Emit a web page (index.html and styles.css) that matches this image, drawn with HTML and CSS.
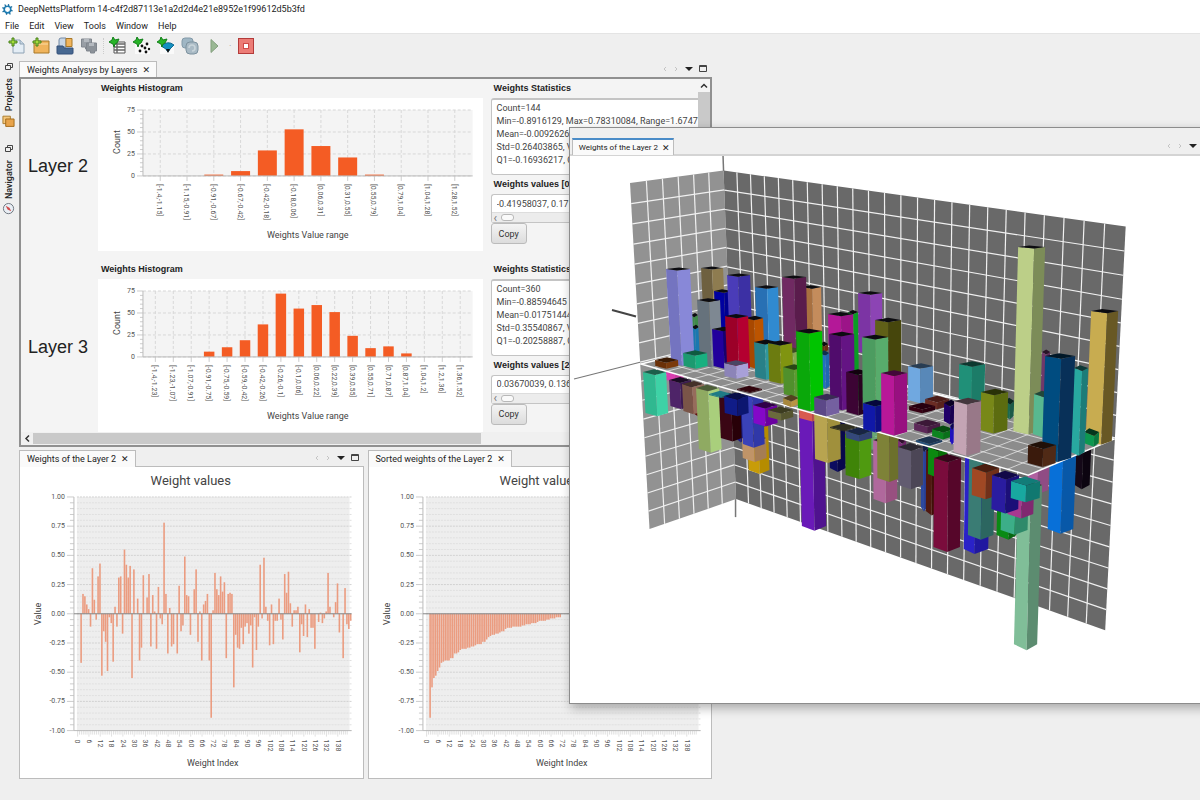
FILE: index.html
```html
<!DOCTYPE html>
<html lang="en">

<head>
    <meta charset="UTF-8">
    <meta name="viewport" content="width=device-width, initial-scale=1.0">
    <title>DeepNettsPlatform</title>
    <link rel="stylesheet" href="styles.css">
</head>

<body>
    <header class="titlebar">
        <svg class="logo" viewBox="0 0 12 12">
            <circle cx="6" cy="6" r="3.6" fill="none" stroke="#1d7fb8" stroke-width="1.8" />
            <path d="M3 0.5 4.5 3M7 0.2 7.5 2.5M0.4 4 3 5M0.6 8.6 3 7.4M9 11.4 8 9M5 11.8 4.8 9.5M11.6 7.6 9 7M11 2.6 9 4.2" stroke="#1d6f9f" stroke-width="1.4" />
        </svg>
        <span>DeepNettsPlatform 14-c4f2d87113e1a2d2d4e21e8952e1f99612d5b3fd</span>
    </header>

    <nav class="menubar">
        <button>File</button>
        <button>Edit</button>
        <button>View</button>
        <button>Tools</button>
        <button>Window</button>
        <button>Help</button>
    </nav>

    <div class="toolbar">
        <button aria-label="New file">
            <svg viewBox="0 0 18 18">
                <path d="M5 3h7l4 4v9H5z" fill="#e4edf5" stroke="#8fa3b5" />
                <path d="M12 3v4h4" fill="#c5d5e3" stroke="#8fa3b5" />
                <path d="M4 1h2v3h3v2H6v3H4V6H1V4h3z" fill="#a4dc3c" stroke="#47801c" />
            </svg>
        </button>
        <button aria-label="New project">
            <svg viewBox="0 0 18 18">
                <path d="M2 4h15v12H2z" fill="#f0b45c" stroke="#a87828" />
                <path d="M3 7h13" stroke="#fbdca4" />
                <path d="M4 1h2v3h3v2H6v3H4V6H1V4h3z" fill="#a4dc3c" stroke="#47801c" />
            </svg>
        </button>
        <button aria-label="Open project">
            <svg viewBox="0 0 18 18">
                <path d="M3 10V3q0-2 2-2h5v9z" fill="#c8d6e6" stroke="#7389a4" />
                <path d="M10 1.500h6v8h-6z" fill="#f0b45c" stroke="#a87828" />
                <path d="M1 9h6l1 2h9v5q0 1-1 1H2q-1 0-1-1z" fill="#476891" stroke="#34517a" />
            </svg>
        </button>
        <button aria-label="Save all">
            <svg viewBox="0 0 18 18">
                <path d="M1.500 2h10v8h-2v2h-4v-2h-4z" fill="#989ea5" stroke="#80868e" />
                <path d="M6.500 6h10v8h-2v2h-4v-2h-4z" fill="#8c9299" stroke="#80868e" />
                <path d="M4 2h5v3H4zM9 6h5v3H9z" fill="#b4b9bf" />
            </svg>
        </button>
        <span class="separator"></span>
        <button aria-label="New data set">
            <svg viewBox="0 0 18 18">
                <path d="M5 5h11v11H5z" fill="#fff" stroke="#555" />
                <path d="M5 7h11M5 10h11M5 13h11M8 6v10" stroke="#666" stroke-width="1.4" />
                <path d="M4 0l2 3 4-1-2 4-2 1-1 3-1-3-4-2 3-2z" fill="#28b428" stroke="#12801a" />
            </svg>
        </button>
        <button aria-label="New network">
            <svg viewBox="0 0 18 18">
                <path d="M2 6h15v11H2z" fill="#fafafa" />
                <g fill="#111"><circle cx="9" cy="9" r="1.400" /><circle cx="14" cy="7" r="1.400" /><circle cx="12" cy="11" r="1.400" /><circle cx="7" cy="14" r="1.400" /><circle cx="13" cy="15" r="1.400" /><circle cx="16" cy="12" r="1.200" /></g>
                <path d="M4 0l2 3 4-1-2 4-2 1-1 3-1-3-4-2 3-2z" fill="#28b428" stroke="#12801a" />
            </svg>
        </button>
        <button aria-label="New model">
            <svg viewBox="0 0 18 18">
                <path d="M3 6h14v11H3z" fill="#fafafa" />
                <path d="M4 9q7-6 13-1l-4 4q-2 5-4 0z" fill="#1490c0" stroke="#106a90" />
                <path d="M9 12l2 4 2-4" fill="#111" />
                <path d="M4 0l2 3 4-1-2 4-2 1-1 3-1-3-4-2 3-2z" fill="#28b428" stroke="#12801a" />
            </svg>
        </button>
        <button aria-label="Build">
            <svg viewBox="0 0 18 18">
                <rect x="1" y="1" width="11" height="10" rx="3" fill="#9fb6c4" stroke="#8299a8" />
                <rect x="5" y="5" width="12" height="12" rx="4" fill="#a9bac5" stroke="#7d929f" />
                <path d="M8 11a3 3 0 1 1 3 3" fill="none" stroke="#c8d4da" stroke-width="1.600" />
            </svg>
        </button>
        <button aria-label="Run">
            <svg viewBox="0 0 18 18"><path d="M6 2.500l7 6.500-7 6.500z" fill="#9ab894" stroke="#84a07e" /></svg>
        </button>
        <span class="more">·</span>
        <button aria-label="Stop">
            <svg viewBox="0 0 18 18">
                <rect x="1.500" y="1.500" width="15" height="15" fill="#ec7c76" stroke="#b33b3a" />
                <rect x="6.500" y="6.500" width="5" height="5" fill="#fff" stroke="#d04a48" />
            </svg>
        </button>
    </div>

    <div class="shell">
        <aside class="sidebar">
            <button class="dock" aria-label="Restore group"><svg viewBox="0 0 10 10"><path d="M3.500 3V1.500h5v4H7M1.500 3.500h5v4h-5z" fill="none" stroke="#444" /></svg></button>
            <button class="side-tab">
                <svg viewBox="0 0 14 14"><path d="M1 2h8v8H1z" fill="#f5c77c" stroke="#a87828" /><path d="M4 5h9v8H4z" fill="#e8a44c" stroke="#a06818" /></svg>
                <span>Projects</span>
            </button>
            <button class="dock" aria-label="Restore group"><svg viewBox="0 0 10 10"><path d="M3.500 3V1.500h5v4H7M1.500 3.500h5v4h-5z" fill="none" stroke="#444" /></svg></button>
            <button class="side-tab">
                <svg viewBox="0 0 14 14"><circle cx="7" cy="7" r="5.500" fill="#e9eef4" stroke="#68707a" /><path d="M4 4l4 2 2 4-4-2z" fill="#d04a4a" /></svg>
                <span>Navigator</span>
            </button>
        </aside>

        <main class="workspace">
            <section class="dock-panel layers">
                <div class="tab-row">
                    <div class="tab"><span>Weights Analysys by Layers</span><button class="close" aria-label="Close">✕</button></div>
                    <div class="tab-tools"></div>
                </div>
                <div class="layers-body">
                    <div class="layers-view">
                        <div class="layer-row">
                            <h2>Layer 2</h2>
                            <div class="histogram">
                                <h3>Weights Histogram</h3>
                                <svg class="chart" id="histogram2" viewBox="0 0 385 153"></svg>
                            </div>
                            <div class="stats">
                                <h3><label for="stats2">Weights Statistics</label></h3>
                                <textarea id="stats2" readonly>Count=144
Min=-0.8916129, Max=0.78310084, Range=1.6747137
Mean=-0.009262665
Std=0.26403865, Var=0.0697
Q1=-0.16936217, Q3=0.15</textarea>
                                <h3><label for="values2">Weights values [0]</label></h3>
                                <div class="values">
                                    <input id="values2" value="-0.41958037, 0.17182" readonly>
                                    <div class="mini-scroll"><i>‹</i><b></b></div>
                                </div>
                                <button class="copy">Copy</button>
                            </div>
                        </div>
                        <div class="layer-row">
                            <h2>Layer 3</h2>
                            <div class="histogram">
                                <h3>Weights Histogram</h3>
                                <svg class="chart" id="histogram3" viewBox="0 0 385 153"></svg>
                            </div>
                            <div class="stats">
                                <h3><label for="stats3">Weights Statistics</label></h3>
                                <textarea id="stats3" readonly>Count=360
Min=-0.88594645
Mean=0.01751444
Std=0.35540867, Var=0.1263
Q1=-0.20258887, Q3=0.21</textarea>
                                <h3><label for="values3">Weights values [2]</label></h3>
                                <div class="values">
                                    <input id="values3" value="0.03670039, 0.13634" readonly>
                                    <div class="mini-scroll"><i>‹</i><b></b></div>
                                </div>
                                <button class="copy">Copy</button>
                            </div>
                        </div>
                    </div>
                    <div class="vscroll"><svg viewBox="0 0 12 12"><path d="M3 8l3-3 3 3" fill="none" stroke="#333" stroke-width="1.500" /></svg><b></b></div>
                    <div class="hscroll"><svg viewBox="0 0 12 12"><path d="M8 3L5 6l3 3" fill="none" stroke="#333" stroke-width="1.500" /></svg><b></b></div>
                </div>
            </section>

            <div class="split">
                <section class="dock-panel">
                    <div class="tab-row">
                        <div class="tab"><span>Weights of the Layer 2</span><button class="close" aria-label="Close">✕</button></div>
                        <div class="tab-tools"></div>
                    </div>
                    <div class="chart-body"><svg class="chart" id="weights" viewBox="0 0 343 312"></svg></div>
                </section>
                <section class="dock-panel">
                    <div class="tab-row">
                        <div class="tab"><span>Sorted weights of the Layer 2</span><button class="close" aria-label="Close">✕</button></div>
                        <div class="tab-tools"></div>
                    </div>
                    <div class="chart-body"><svg class="chart" id="sorted" viewBox="0 0 343 312"></svg></div>
                </section>
            </div>
        </main>
    </div>

    <section class="float-window">
        <div class="tab-row">
            <div class="tab active"><span>Weights of the Layer 2</span><button class="close" aria-label="Close">✕</button></div>
            <div class="tab-tools"></div>
        </div>
        <svg class="scene" id="scene" viewBox="570 156 646 547"></svg>
    </section>

    <script src="charts.js"></script>
</body>

</html>
```
FILE: styles.css
```css
* {
    box-sizing: border-box;
}

body {
    font-family: Roboto, "Open Sans", Arial, sans-serif;
    font-size: 9px;
    color: #222;
    background-color: #efefef;
    margin: 0;
    min-height: 100vh;
    position: relative;
    overflow: hidden;
}

button {
    font: inherit;
    color: inherit;
    background: none;
    border: none;
    padding: 0;
}

h2, h3 {
    margin: 0;
}

svg {
    display: block;
}

.titlebar {
    display: flex;
    align-items: center;
    gap: 5px;
    height: 18px;
    padding-left: 2px;
    background-color: #fff;
}

.logo {
    width: 11px;
    height: 11px;
}

.menubar {
    display: flex;
    align-items: center;
    gap: 10px;
    height: 15px;
    padding-left: 5px;
    background-color: #fff;
}

.toolbar {
    display: flex;
    align-items: center;
    gap: 6px;
    height: 27px;
    padding: 0 8px 2px;
    border-top: 1px solid #e4e4e4;
}

.toolbar svg {
    width: 18px;
    height: 18px;
}

.separator {
    width: 0;
    height: 16px;
    margin: 0 -1px;
    border-left: 1px dotted #ccc;
}

.more {
    color: #999;
    width: 2px;
}

.shell {
    display: flex;
}

.sidebar {
    width: 19px;
    display: flex;
    flex-direction: column;
    align-items: center;
    padding-right: 2px;
}

.dock {
    margin: 2px 0 6px;
}

.dock svg {
    width: 10px;
    height: 10px;
}

.side-tab {
    writing-mode: vertical-rl;
    transform: rotate(180deg);
    display: flex;
    align-items: center;
    gap: 3px;
    font-weight: 500;
    margin-bottom: 15px;
}

.side-tab svg {
    width: 13px;
    height: 13px;
    transform: rotate(180deg);
}

.workspace {
    flex: 0 0 57.75%;
    min-width: 0;
    padding-top: 1px;
}

.tab-row {
    display: flex;
    justify-content: space-between;
    height: 16px;
}

.tab {
    display: flex;
    align-items: center;
    gap: 5px;
    padding: 0 6px 0 7px;
    background-color: #fafafa;
    border: 1px solid #bcbcbc;
    border-bottom: none;
}

.close {
    font-family: "DejaVu Sans", sans-serif;
    font-size: 9px;
}

.tab-tools svg {
    width: 50px;
    height: 16px;
}

.layers-body {
    display: grid;
    grid-template-columns: minmax(0, 1fr) 12px;
    border: 2px solid #909090;
    background-color: #f4f4f4;
}

.layers-view {
    overflow: hidden;
}

.layer-row {
    display: grid;
    grid-template-columns: minmax(0, 10fr) minmax(0, 50fr) minmax(0, 28fr);
    margin-bottom: 9px;
}

.layer-row:last-child {
    margin-bottom: 0;
}

.layer-row h2 {
    align-self: center;
    font-family: "Liberation Sans", Arial, sans-serif;
    font-size: 18px;
    font-weight: 400;
    padding: 3px 0 0 7px;
    white-space: nowrap;
}

.layer-row h3 {
    font-family: "Liberation Sans", Arial, sans-serif;
    font-size: 9px;
    line-height: 19px;
    padding-left: 3px;
    white-space: nowrap;
}

.chart {
    width: 100%;
    background-color: #fff;
}

.stats {
    padding-left: 8px;
}

.stats textarea {
    display: block;
    width: 100%;
    height: 77px;
    padding: 2px 5px;
    font: inherit;
    line-height: 13px;
    color: #444;
    white-space: pre;
    overflow: hidden;
    resize: none;
    border: 1px solid #c4c4c4;
    border-top-width: 2px;
    border-right: none;
    border-radius: 3px 0 0 3px;
    outline: none;
}

.values {
    border: 1px solid #c4c4c4;
    border-right: none;
    border-radius: 3px 0 0 3px;
    background-color: #fff;
}

.values input {
    display: block;
    width: 100%;
    height: 17px;
    padding: 0 5px;
    font: inherit;
    color: #444;
    border: none;
    background: none;
    outline: none;
}

.mini-scroll {
    display: flex;
    align-items: center;
    gap: 4px;
    height: 10px;
    padding-left: 2px;
    background-color: #ececec;
    border-top: 1px solid #ddd;
}

.mini-scroll i {
    font-style: normal;
    line-height: 8px;
    font-size: 12px;
    color: #777;
}

.mini-scroll b {
    width: 13px;
    height: 7px;
    border: 1px solid #b8b8b8;
    border-radius: 3px;
    background-color: #fafafa;
}

.copy {
    display: block;
    height: 21px;
    padding: 0 7px;
    color: #333;
    border: 1px solid #bbb;
    border-radius: 3px;
    background-image: linear-gradient(#f4f4f4, #dcdcdc);
}

.vscroll {
    background-color: #c9c9c9;
}

.vscroll svg {
    width: 12px;
    height: 13px;
    background-color: #f4f4f4;
}

.hscroll {
    grid-column: 1 / -1;
    display: flex;
    height: 13px;
    background-color: #f0f0f0;
}

.hscroll svg {
    width: 12px;
    height: 13px;
}

.hscroll b {
    width: 65%;
    margin: 1px 0;
    background-color: #c9c9c9;
}

.split {
    display: grid;
    grid-template-columns: minmax(0, 1fr) minmax(0, 1fr);
    gap: 4px;
    margin-top: 3px;
}

.chart-body {
    border: 1px solid #bcbcbc;
}

.split .tab {
    position: relative;
    z-index: 1;
    margin-bottom: -1px;
}

.float-window {
    position: absolute;
    top: 127px;
    left: 47.4%;
    right: -16px;
    background-color: #fff;
    border: 1px solid #8c8c8c;
    border-right: none;
    box-shadow: 2px 4px 10px rgba(0, 0, 0, 0.3);
}

.float-window .tab-row {
    height: 28px;
    padding: 10px 0 0 2px;
    background-color: #efefef;
    border-bottom: 2px solid #d4d4d4;
}

.float-window .tab {
    font-size: 8px;
    gap: 4px;
    padding: 0 4px 0 6px;
    margin-bottom: -1px;
}

.tab.active {
    border-top: 2px solid #4a8cc8;
}

.scene {
    width: 100%;
}

.axis-text {
    font-size: 7px;
    fill: #555;
}

.axis-title {
    font-size: 9px;
    fill: #444;
}

.chart-title {
    font-size: 13px;
    fill: #444;
}
```
FILE: charts.js
```js
var tools = '<svg viewBox="0 0 50 16">' +
    '<path d="M4 6l-2 2 2 2M13 6l2 2-2 2" fill="none" stroke="#c4c4c4"/>' +
    '<path d="M23 6h8l-4 4z" fill="#222"/>' +
    '<path d="M37.5 4.500h7v6h-7zM37 5.500h8" fill="none" stroke="#444"/></svg>';

document.querySelectorAll('.tab-tools').forEach(function (el) {
    el.innerHTML = tools;
});

function line(x1, y1, x2, y2, color, extra) {
    return '<line x1="' + x1 + '" y1="' + y1 + '" x2="' + x2 + '" y2="' + y2 + '" stroke="' + color + '" ' + (extra || '') + '/>';
}

function rect(x, y, w, h, color) {
    return '<rect x="' + x + '" y="' + y + '" width="' + w + '" height="' + h + '" fill="' + color + '"/>';
}

function text(x, y, cls, anchor, str, angle) {
    var turn = angle ? ' transform="rotate(' + angle + ' ' + x + ' ' + y + ')"' : '';
    return '<text x="' + x + '" y="' + y + '" class="' + cls + '" text-anchor="' + anchor + '"' + turn + '>' + str + '</text>';
}

// ---- histograms ----
function drawHistogram(id, edges, values, first, step, barWidth) {
    var left = 45, right = 375, top = 12, bottom = 78;
    var dash = 'stroke-dasharray="3 2"';
    var out = rect(left, top, right - left, bottom - top, '#f4f4f4');
    for (var t = 0; t <= 75; t += 5) {
        var y = bottom - t * 66 / 75;
        var major = t % 25 === 0;
        out += line(major ? 39 : 42, y, left, y, '#ccc');
        if (major) {
            out += line(left, y, right, y, '#d8d8d8', dash);
            out += text(37, y + 2, 'axis-text', 'end', t);
        }
    }
    values.forEach(function (v, i) {
        var x = first + step * i;
        out += line(x, top, x, bottom, '#d8d8d8', dash);
        out += line(x, bottom, x, bottom + 5, '#ccc');
        out += rect(x - barWidth / 2, bottom - v * 66 / 75, barWidth, v * 66 / 75, '#f45c24');
        out += text(x - 3, 86, 'axis-text', 'start', '[' + edges[i] + ',' + edges[i + 1] + ']', 90);
    });
    out += line(left, top, left, bottom, '#bbb') + line(left, bottom, right, bottom, '#bbb');
    out += text(22, 44, 'axis-title', 'middle', 'Count', -90);
    out += text(210, 140, 'axis-title', 'middle', 'Weights Value range');
    document.getElementById(id).innerHTML = out;
}

drawHistogram('histogram2',
    [-1.4, -1.15, -0.91, -0.67, -0.42, -0.18, 0.06, 0.31, 0.55, 0.79, 1.04, 1.28, 1.52],
    [0, 0, 1.5, 5.5, 29, 53, 34, 21, 1.5, 0, 0, 0], 62.3, 26.8, 19);
drawHistogram('histogram3',
    [-1.4, -1.23, -1.07, -0.91, -0.75, -0.59, -0.42, -0.26, -0.1, 0.06, 0.22, 0.39, 0.55, 0.71, 0.87, 1.04, 1.2, 1.36, 1.52],
    [0, 0, 0, 6, 11, 19, 37, 72, 55, 59, 51, 24, 10, 12, 4, 0, 0, 0], 57.4, 17.95, 10.5);

// ---- weight charts ----
var weights = [
    -.42, .17, .15, .08, .04, -.11, .39, .12, -.05, .32, .43, -.53, -.15, -.24, -.49, -.03, -.08, -.41,
    .06, -.11, .31, .32, -.17, .55, .42, .31, .41, -.55, .38, 0, .13, -.40, -.29, .33, 0, .14,
    .34, -.28, .16, .02, -.30, .23, -.04, -.09, .78, .17, -.34, .05, -.28, -.26, 0, -.34, .24, -.15,
    -.10, .49, .16, .15, -.18, 0, .21, .38, -.24, .02, -.40, .08, .11, .17, -.40, -.89, .03, .35,
    .21, .16, .32, .19, .27, -.38, .17, .18, .17, -.63, -.18, -.29, -.30, -.12, -.26, -.11, -.08, -.17,
    -.10, -.46, -.03, -.31, -.11, .42, -.04, .48, .06, -.06, -.27, .08, -.26, -.06, -.06, .13, -.05, -.22,
    .34, .18, .36, .09, -.11, .03, .03, .06, -.33, -.09, -.19, .08, -.20, .04, -.12, -.12, -.30, 0,
    -.07, .01, -.08, -.04, .02, .35, .06, 0, -.03, .10, .26, -.16, 0, -.38, .22, -.09, -.13, -.06
];

function drawWeights(id, values) {
    var zero = 147, unit = 117, left = 54, step = 1.888;
    var out = rect(57, 30, 273, 234, '#eeeeee');
    for (var k = -20; k <= 20; k++) {
        var y = zero - k * unit / 20;
        var major = k % 5 === 0;
        out += line(57, y, 332, y, major ? '#d2d2d2' : '#e0e0e0', 'stroke-dasharray="2 1"');
        out += line(major ? 47 : 50, y, left, y, '#ccc');
        if (major) {
            out += text(45, y + 2, 'axis-text', 'end', (k / 20).toFixed(2));
        }
    }
    values.forEach(function (v, i) {
        var x = 61.2 + step * i;
        out += rect(x - 0.8, v > 0 ? zero - v * unit : zero, 1.6, Math.abs(v) * unit, '#eb9c80');
        out += line(57.7 + step * i, 264, 57.7 + step * i, i % 6 ? 268 : 270, '#ccc', 'stroke-width="0.6"');
        if (i % 6 === 0) {
            out += text(55.5 + step * i, 273, 'axis-text', 'start', i, 90);
        }
    });
    out += line(left, 30, left, 264, '#bbb') + line(left, 264, 332, 264, '#bbb');
    out += line(left, zero, 332, zero, '#888');
    out += text(171, 18, 'chart-title', 'middle', 'Weight values');
    out += text(21, 147, 'axis-title', 'middle', 'Value', -90);
    out += text(193, 299, 'axis-title', 'middle', 'Weight Index');
    document.getElementById(id).innerHTML = out;
}

drawWeights('weights', weights);
drawWeights('sorted', weights.slice().sort(function (a, b) { return a - b; }));

// ---- 3D scene ----

// maps the unit square onto a quad (corners at 0,0  1,0  1,1  0,1)
function project(q) {
    var dx1 = q[1][0] - q[2][0], dx2 = q[3][0] - q[2][0], sx = q[0][0] - q[1][0] + q[2][0] - q[3][0];
    var dy1 = q[1][1] - q[2][1], dy2 = q[3][1] - q[2][1], sy = q[0][1] - q[1][1] + q[2][1] - q[3][1];
    var det = dx1 * dy2 - dx2 * dy1;
    var g = (sx * dy2 - dx2 * sy) / det;
    var h = (dx1 * sy - sx * dy1) / det;
    return function (u, v) {
        var w = g * u + h * v + 1;
        return [
            ((q[1][0] - q[0][0] + g * q[1][0]) * u + (q[3][0] - q[0][0] + h * q[3][0]) * v + q[0][0]) / w,
            ((q[1][1] - q[0][1] + g * q[1][1]) * u + (q[3][1] - q[0][1] + h * q[3][1]) * v + q[0][1]) / w
        ];
    };
}

function poly(points, color) {
    return '<polygon points="' + points.map(function (p) { return p[0].toFixed(1) + ',' + p[1].toFixed(1); }).join(' ') + '" fill="' + color + '"/>';
}

function plane(quad, cols, rows, color, width) {
    var at = project(quad);
    var out = poly(quad, color);
    function gridLine(a, b) {
        return line(a[0], a[1], b[0], b[1], '#f0f0f0', 'stroke-width="' + width + '"');
    }
    for (var c = 1; c < cols; c++) {
        out += gridLine(at(c / cols, 0), at(c / cols, 1));
    }
    for (var r = 1; r < rows; r++) {
        out += gridLine(at(0, r / rows), at(1, r / rows));
    }
    return out;
}

function shade(hex, f) {
    var n = parseInt(hex.slice(1), 16);
    return 'rgb(' + [n >> 16, (n >> 8) & 255, n & 255].map(function (c) { return Math.round(c * f); }).join(',') + ')';
}

// b = [left, middle, right, top, bottom, left colour, right colour, top colour]
function box(b) {
    function lean(x) { return 0.04 - (x - 730) * 0.00023; }
    var ht = 1.5 + Math.max(0, b[3] - 270) * 0.014;
    var hb = 1.5 + Math.max(0, b[4] - 270) * 0.012;
    var d = b[4] - b[3];
    function foot(x) { return x + lean(x) * d; }
    return poly([[b[0], b[3]], [b[1], b[3] + ht], [foot(b[1]), b[4] + hb], [foot(b[0]), b[4]]], b[5]) +
        poly([[b[1], b[3] + ht], [b[2], b[3]], [foot(b[2]), b[4]], [foot(b[1]), b[4] + hb]], b[6]) +
        poly([[b[0], b[3]], [b[0] + b[2] - b[1], b[3] - ht], [b[2], b[3]], [b[1], b[3] + ht]], b[7] || (b[3] < 345 ? '#0c0c10' : shade(b[6], 0.45)));
}

var below = [
    [666, 675, 683, 371, 380, '#d93fb0', '#c83aa0', '#d93fb0'],
    [643, 655, 666, 372, 413, '#30b890', '#3ed2a6'],
    [692, 697, 703, 396, 413, '#601010', '#701414'],
    [669, 680, 691, 380, 406, '#4e2468', '#3c1a52'],
    [682, 692, 704, 384, 411, '#7a5548', '#966c5c'],
    [696, 708, 719, 388, 449, '#8faa62', '#a9cf7c'],
    [735, 739, 743, 395, 439, '#1c1c88', '#1a1a78'],
    [719, 731, 740, 396, 438, '#3a0614', '#280008'],
    [709, 721, 732, 394, 395, '#1f7a85', '#1f7a85', '#1f7a85'],
    [747, 758, 768, 425, 470, '#c89c08', '#b58c00'],
    [742, 754, 766, 438, 458, '#c09468', '#a57d55'],
    [741, 752, 763, 394, 444, '#3a42b8', '#3038a8'],
    [724, 737, 748, 396, 413, '#101c88', '#0c1670', '#080e48'],
    [753, 765, 777, 405, 423, '#8408c8', '#6a00a0'],
    [768, 781, 793, 410, 417, '#6a6a3c', '#55552f', '#3c3c20'],
    [799, 812, 824, 410, 526, '#6a1ab8', '#4f128f'],
    [799, 812, 824, 408, 418, '#d85a50', '#c04c48', '#d85a50'],
    [829, 837, 845, 421, 468, '#0c0c60', '#08084c'],
    [814, 827, 840, 412, 459, '#b8a450', '#a0903c'],
    [860, 872, 882, 434, 446, '#5f9a68', '#6aa874', '#6aa874'],
    [845, 859, 871, 434, 475, '#3f8408', '#4f9a10'],
    [830, 844, 857, 427, 428, '#303020', '#303020', '#303020'],
    [846, 859, 872, 431, 438, '#34487a', '#304070', '#182444'],
    [873, 885, 897, 440, 499, '#b0689c', '#985080'],
    [877, 889, 900, 430, 478, '#7e8238', '#6c702c'],
    [898, 902, 906, 440, 455, '#7c2c78', '#6c2468'],
    [921, 924, 928, 448, 507, '#2c48a0', '#28409a'],
    [898, 911, 923, 447, 485, '#625c70', '#4c4656', '#2c2832'],
    [926, 932, 940, 450, 511, '#501810', '#401008'],
    [928, 938, 947, 447, 474, '#0c8a10', '#087008'],
    [934, 948, 961, 458, 547, '#7a0c3c', '#56062a', '#38041c'],
    [965, 976, 990, 455, 549, '#2a22c8', '#2018a0'],
    [969, 982, 995, 455, 535, '#3a7c74', '#2c6660'],
    [972, 986, 999, 468, 495, '#a04824', '#70301a', '#4a1e10'],
    [1076, 1083, 1091, 448, 485, '#140818', '#0c0410'],
    [1050, 1063, 1076, 455, 529, '#0870d8', '#0858a8'],
    [1028, 1038, 1049, 465, 490, '#b060a0', '#904c84'],
    [997, 1009, 1017, 508, 535, '#0a8a14', '#076810'],
    [1018, 1031, 1042, 485, 644, '#80be98', '#5c8c70'],
    [1001, 1015, 1028, 508, 530, '#3cae88', '#2e8a6a'],
    [1008, 1022, 1034, 485, 514, '#a83890', '#802870'],
    [992, 1006, 1019, 475, 509, '#2a1ca0', '#1c0f78', '#120848'],
    [1011, 1026, 1040, 481, 498, '#18a8a0', '#107870', '#127c78']
];

var above = [
    [701, 712, 723, 268, 340, '#6e6040', '#8e7c50'],
    [691, 694, 698, 315, 328, '#3f8a4a', '#3f8a4a'],
    [692, 695, 699, 327, 352, '#1a78b0', '#1a78b0'],
    [714, 724, 732, 291, 350, '#0000a0', '#000090'],
    [727, 738, 750, 275, 340, '#4a3cb8', '#3c30a4'],
    [697, 709, 720, 300, 365, '#66727c', '#7e8892'],
    [755, 767, 778, 287, 347, '#2870b4', '#308ad0'],
    [746, 754, 763, 318, 366, '#a84800', '#bc5400'],
    [712, 723, 735, 329, 366, '#22009c', '#18006c'],
    [725, 737, 748, 316, 368, '#9c0028', '#b40030'],
    [801, 812, 821, 287, 345, '#a87040', '#c48c5c'],
    [782, 794, 806, 277, 350, '#702a62', '#5a1c4c'],
    [666, 677, 690, 269, 363, '#7474c0', '#8888d8'],
    [655, 666, 678, 360, 366, '#6a3008', '#7a3a0c', '#3a1a04'],
    [683, 695, 707, 353, 366, '#1c9a70', '#18b080', '#0f5a40'],
    [724, 736, 748, 363, 376, '#8c84b8', '#a8a0d8', '#4a4664'],
    [754, 765, 777, 342, 377, '#288088', '#30989c'],
    [783, 793, 803, 350, 370, '#7a9a48', '#88a850'],
    [768, 780, 792, 343, 381, '#6c7c10', '#809410'],
    [783, 794, 805, 367, 394, '#50902c', '#5c9c30'],
    [783, 791, 799, 398, 404, '#a8883c', '#b89444'],
    [737, 750, 762, 389, 390, '#30040c', '#30040c', '#30040c'],
    [820, 824, 828, 344, 350, '#6a2c10', '#6a2c10'],
    [820, 825, 829, 353, 386, '#2070c0', '#2068b0'],
    [848, 853, 858, 312, 400, '#088a20', '#0a9c24'],
    [858, 870, 882, 293, 352, '#7c34a4', '#8c44b4'],
    [828, 841, 853, 314, 345, '#b41898', '#9c1488'],
    [875, 888, 901, 320, 400, '#606018', '#46460c'],
    [829, 841, 854, 334, 407, '#500c6c', '#641484'],
    [846, 858, 870, 372, 412, '#3c0434', '#28021f'],
    [862, 875, 888, 337, 410, '#4c9c60', '#58ac6c'],
    [796, 809, 822, 331, 408, '#0aa80a', '#00c400'],
    [814, 826, 839, 397, 413, '#5c4888', '#7460a0', '#3a2c54'],
    [863, 875, 888, 403, 429, '#1018a8', '#0c1084'],
    [908, 920, 933, 366, 400, '#70a8e0', '#5888b8'],
    [959, 972, 985, 364, 399, '#209078', '#1c7c68'],
    [925, 937, 949, 399, 406, '#6a2c24', '#58221c', '#4a1c18'],
    [909, 922, 935, 406, 410, '#380014', '#2c0010', '#280010'],
    [944, 950, 957, 403, 421, '#200068', '#180050'],
    [1005, 1010, 1014, 401, 416, '#1c6a50', '#1c5a48'],
    [981, 994, 1008, 392, 430, '#788818', '#5c6c10'],
    [914, 927, 940, 423, 430, '#5c2858', '#481c44', '#3c1838'],
    [932, 943, 954, 429, 436, '#0c8420', '#0a701a', '#064c10'],
    [916, 929, 942, 440, 442, '#24507c', '#1c3c60', '#1c3450'],
    [950, 952, 955, 426, 441, '#2010c0', '#2010c0'],
    [881, 894, 907, 373, 432, '#b81898', '#981080'],
    [954, 967, 981, 401, 452, '#c4a4b4', '#987888'],
    [1042, 1046, 1050, 352, 400, '#70386a', '#602c5c'],
    [1018, 1034, 1045, 247, 431, '#bccf88', '#7c8c58'],
    [1034, 1044, 1052, 394, 434, '#58b890', '#48a080'],
    [1091, 1107, 1118, 311, 441, '#c8ac50', '#685824'],
    [1084, 1094, 1099, 432, 443, '#0c9850', '#0a7840'],
    [1074, 1082, 1088, 368, 452, '#28a8a0', '#1c7c78'],
    [1045, 1061, 1075, 356, 458, '#004c80', '#083058', '#001828'],
    [1028, 1043, 1056, 445, 463, '#3a1a0c', '#502a16', '#201008']
];

var floor = [[641, 364], [730, 342], [1113.5, 439], [1028, 475]];
var scene = line(723, 156, 723.500, 171, '#777', 'stroke-width="1.5"') +
    line(735.5, 499, 735.5, 517, '#777', 'stroke-width="1.5"') +
    line(612, 310, 636, 316.5, '#444', 'stroke-width="2"') +
    line(574, 379, 641, 362, '#777', 'stroke-width="1"') +
    plane([[630, 183], [723.5, 170.5], [736, 499], [649.5, 529]], 6, 18, '#929292', 1.2) +
    plane([[723.5, 170.5], [1125.5, 226.5], [1105, 630], [736, 499]], 24, 18, '#696969', 1.2);
scene += below.map(box).join('');
scene += plane(floor, 6, 24, '#8c8c8c', 0.7).replace(/<polygon/, '<polygon stroke="#fff" stroke-width="1.5"');
scene += above.map(box).join('');
document.getElementById('scene').innerHTML = scene;
```
